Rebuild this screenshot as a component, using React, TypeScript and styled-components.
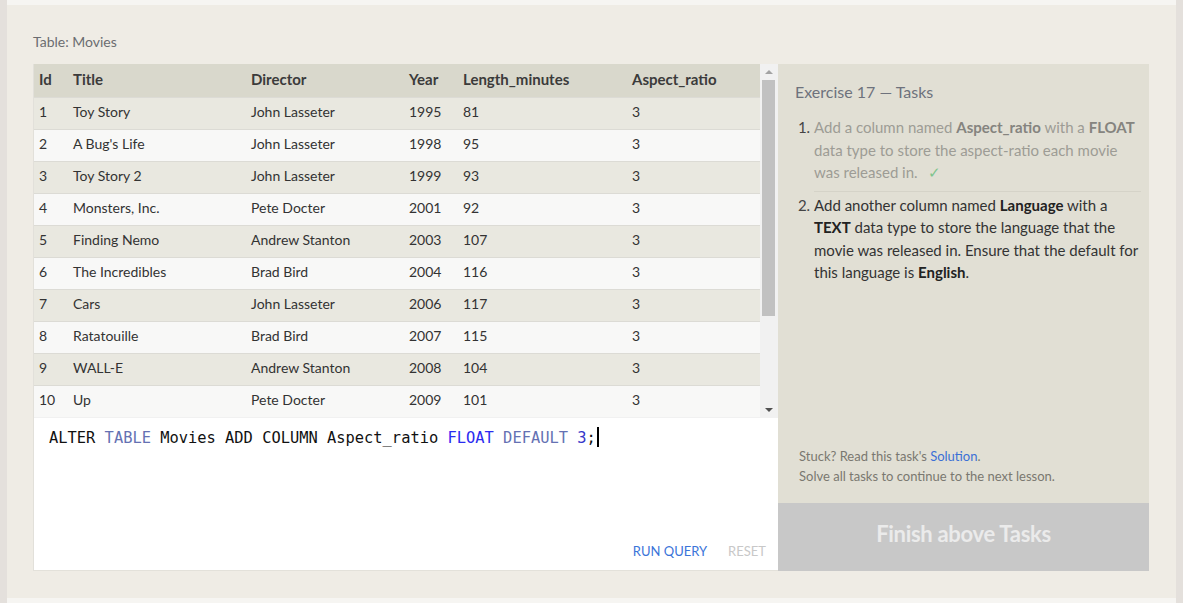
import React from "react";
import styled, { createGlobalStyle } from "styled-components";

interface Movie {
  id: number;
  title: string;
  director: string;
  year: number;
  length: number;
  aspect: number;
}

const movies: Movie[] = [
  { id: 1, title: "Toy Story", director: "John Lasseter", year: 1995, length: 81, aspect: 3 },
  { id: 2, title: "A Bug's Life", director: "John Lasseter", year: 1998, length: 95, aspect: 3 },
  { id: 3, title: "Toy Story 2", director: "John Lasseter", year: 1999, length: 93, aspect: 3 },
  { id: 4, title: "Monsters, Inc.", director: "Pete Docter", year: 2001, length: 92, aspect: 3 },
  { id: 5, title: "Finding Nemo", director: "Andrew Stanton", year: 2003, length: 107, aspect: 3 },
  { id: 6, title: "The Incredibles", director: "Brad Bird", year: 2004, length: 116, aspect: 3 },
  { id: 7, title: "Cars", director: "John Lasseter", year: 2006, length: 117, aspect: 3 },
  { id: 8, title: "Ratatouille", director: "Brad Bird", year: 2007, length: 115, aspect: 3 },
  { id: 9, title: "WALL-E", director: "Andrew Stanton", year: 2008, length: 104, aspect: 3 },
  { id: 10, title: "Up", director: "Pete Docter", year: 2009, length: 101, aspect: 3 },
];

const GlobalStyle = createGlobalStyle`
  html, body {
    margin: 0;
    padding: 0;
    background: #e4e0dc;
    font-family: Lato, "Open Sans", sans-serif;
  }
`;

const Shell = styled.div`
  height: 603px;
  padding: 0 7px;
  box-sizing: border-box;
`;

const Frame = styled.div`
  height: 100%;
  background: #f6f5f2;
  padding: 5px 0;
  box-sizing: border-box;
`;

const Card = styled.div`
  height: 100%;
  background: #efece5;
  padding: 27px 27px 0 26px;
  box-sizing: border-box;
  display: flex;
  flex-direction: column;
`;

const Caption = styled.div`
  font-size: 14px;
  line-height: 20px;
  color: #6b6c70;
  margin-bottom: 12px;
`;

const Workspace = styled.div`
  display: flex;
  height: 507px;
`;

const LeftColumn = styled.div`
  width: 745px;
  flex: none;
  display: flex;
  flex-direction: column;
`;

const TableArea = styled.div`
  display: flex;
  height: 354px;
  overflow: hidden;
  background: #f1f1f1;
  border-left: 1px solid #e2e0da;
`;

const Table = styled.table`
  width: 726px;
  flex: none;
  align-self: flex-start;
  border-collapse: collapse;
  table-layout: fixed;
  font-size: 14px;
  color: #333;
`;

const HeadCell = styled.th<{ $w: number }>`
  width: ${(p) => p.$w}px;
  box-sizing: border-box;
  height: 33px;
  padding: 0 0 3px 5px;
  text-align: left;
  font-size: 15px;
  font-weight: 700;
  color: #3b3b3b;
  background: #d9d8cc;
  white-space: nowrap;
`;

const Row = styled.tr<{ $odd: boolean }>`
  background: ${(p) => (p.$odd ? "#e9e8e0" : "#f8f8f7")};
  border-top: 1px solid #dcdbd5;
`;

const Cell = styled.td`
  height: 32px;
  box-sizing: border-box;
  padding: 0 0 3px 5px;
  white-space: nowrap;
  color: #333;
`;

const ScrollBar = styled.div`
  width: 17px;
  flex: none;
  display: flex;
  flex-direction: column;
  align-items: center;
  background: #f1f1f1;
`;

const Arrow = styled.div<{ $down?: boolean; $muted?: boolean }>`
  width: 0;
  height: 0;
  margin: ${(p) => (p.$down ? "auto 0 6px" : "6px 0 5px")};
  border-left: 4px solid transparent;
  border-right: 4px solid transparent;
  ${(p) =>
    p.$down
      ? `border-top: 4px solid ${p.$muted ? "#a3a3a3" : "#505050"};`
      : `border-bottom: 4px solid ${p.$muted ? "#a3a3a3" : "#505050"};`}
`;

const Thumb = styled.div`
  width: 13px;
  height: 236px;
  margin-top: 1px;
  background: #c1c1c1;
`;

const Editor = styled.div`
  flex: 1;
  background: #fff;
  border-left: 1px solid #e2e0da;
  border-bottom: 1px solid #e3e1da;
  display: flex;
  flex-direction: column;
  padding: 8px 12px 10px 15px;
`;

const Code = styled.div`
  font-family: "DejaVu Sans Mono", "Liberation Mono", monospace;
  font-size: 15.4px;
  line-height: 24px;
  color: #111;
  white-space: pre;
`;

const Tok = styled.span<{ $c: string }>`
  color: ${(p) => p.$c};
`;

const Caret = styled.span`
  display: inline-block;
  width: 2px;
  height: 20px;
  margin-left: 1px;
  background: #000;
  vertical-align: -4px;
`;

const Actions = styled.div`
  margin-top: auto;
  display: flex;
  justify-content: flex-end;
  gap: 21px;
  padding-bottom: 1px;
`;

const ActionButton = styled.span<{ $disabled?: boolean }>`
  font-size: 13px;
  color: ${(p) => (p.$disabled ? "#c8c8c8" : "#3b74d9")};
`;

const TasksPanel = styled.div`
  flex: 1;
  display: flex;
  flex-direction: column;
  background: #e1dfd4;
`;

const TasksBody = styled.div`
  flex: 1;
  padding: 18px 8px 0 17px;
  display: flex;
  flex-direction: column;
`;

const TasksTitle = styled.div`
  font-size: 16px;
  line-height: 20px;
  color: #6e727c;
`;

const TaskList = styled.ol`
  margin: 14px 0 0;
  padding: 0 0 0 19px;
  font-size: 15px;
  line-height: 22.5px;
`;

const TaskItem = styled.li<{ $done?: boolean }>`
  color: ${(p) => (p.$done ? "#9d9c95" : "#333")};
  padding-bottom: ${(p) => (p.$done ? "7px" : "0")};
  margin-bottom: ${(p) => (p.$done ? "2px" : "0")};
  border-bottom: ${(p) => (p.$done ? "1px solid #d5d3c8" : "none")};
  &::marker {
    color: #444;
  }
  b {
    color: ${(p) => (p.$done ? "#85847f" : "#222")};
  }
`;

const Check = styled.span`
  color: #7ec48d;
  margin-left: 10px;
`;

const Hint = styled.div`
  margin-top: auto;
  padding: 0 0 17px 4px;
  font-size: 13px;
  line-height: 20px;
  color: #7a7870;
`;

const Link = styled.span`
  color: #3b6fd6;
`;

const FinishButton = styled.div`
  height: 68px;
  box-sizing: border-box;
  padding-bottom: 7px;
  display: flex;
  align-items: center;
  justify-content: center;
  background: #c8c8c8;
  color: #ebebeb;
  font-size: 22px;
  font-weight: 700;
  letter-spacing: -0.3px;
`;

const columns: { label: string; w: number }[] = [
  { label: "Id", w: 34 },
  { label: "Title", w: 178 },
  { label: "Director", w: 158 },
  { label: "Year", w: 54 },
  { label: "Length_minutes", w: 169 },
  { label: "Aspect_ratio", w: 133 },
];

export default function App() {
  return (
    <>
      <GlobalStyle />
      <Shell>
        <Frame>
          <Card>
            <Caption>Table: Movies</Caption>
            <Workspace>
              <LeftColumn>
                <TableArea>
                  <Table>
                    <thead>
                      <tr>
                        {columns.map((c) => (
                          <HeadCell key={c.label} $w={c.w}>
                            {c.label}
                          </HeadCell>
                        ))}
                      </tr>
                    </thead>
                    <tbody>
                      {movies.map((m, i) => (
                        <Row key={m.id} $odd={i % 2 === 0}>
                          <Cell>{m.id}</Cell>
                          <Cell>{m.title}</Cell>
                          <Cell>{m.director}</Cell>
                          <Cell>{m.year}</Cell>
                          <Cell>{m.length}</Cell>
                          <Cell>{m.aspect}</Cell>
                        </Row>
                      ))}
                    </tbody>
                  </Table>
                  <ScrollBar>
                    <Arrow $muted />
                    <Thumb />
                    <Arrow $down />
                  </ScrollBar>
                </TableArea>
                <Editor>
                  <Code>
                    ALTER <Tok $c="#6571b3">TABLE</Tok> Movies ADD COLUMN Aspect_ratio{" "}
                    <Tok $c="#2b2bf0">FLOAT</Tok> <Tok $c="#6571b3">DEFAULT</Tok>{" "}
                    <Tok $c="#3535c8">3</Tok>;<Caret />
                  </Code>
                  <Actions>
                    <ActionButton>RUN QUERY</ActionButton>
                    <ActionButton $disabled>RESET</ActionButton>
                  </Actions>
                </Editor>
              </LeftColumn>
              <TasksPanel>
                <TasksBody>
                  <TasksTitle>Exercise 17 — Tasks</TasksTitle>
                  <TaskList>
                    <TaskItem $done>
                      Add a column named <b>Aspect_ratio</b> with a <b>FLOAT</b> data type to
                      store the aspect-ratio each movie was released in.
                      <Check>✓</Check>
                    </TaskItem>
                    <TaskItem>
                      Add another column named <b>Language</b> with a <b>TEXT</b> data type to
                      store the language that the movie was released in. Ensure that the default
                      for this language is <b>English</b>.
                    </TaskItem>
                  </TaskList>
                  <Hint>
                    Stuck? Read this task's <Link>Solution</Link>.
                    <br />
                    Solve all tasks to continue to the next lesson.
                  </Hint>
                </TasksBody>
                <FinishButton>Finish above Tasks</FinishButton>
              </TasksPanel>
            </Workspace>
          </Card>
        </Frame>
      </Shell>
    </>
  );
}
